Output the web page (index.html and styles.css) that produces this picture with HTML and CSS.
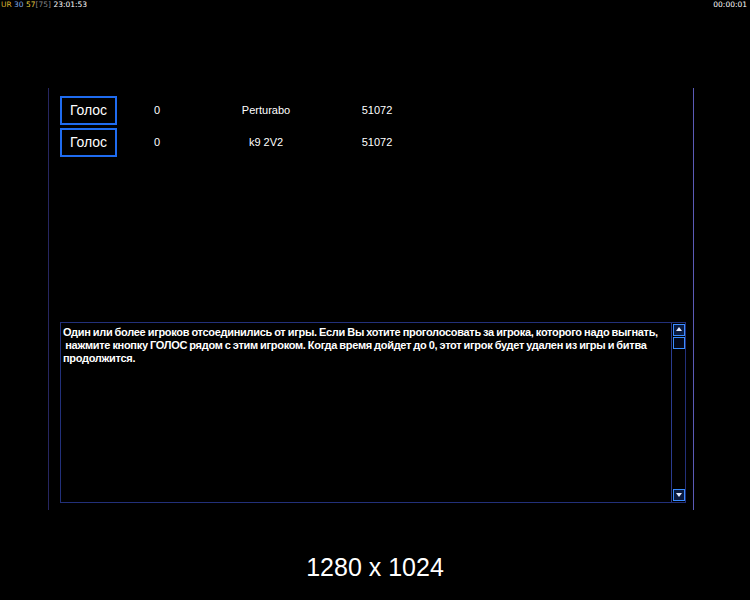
FILE: index.html
```html
<!DOCTYPE html>
<html lang="ru">
<head>
    <meta charset="UTF-8">
    <title>Голосование</title>
    <link rel="stylesheet" href="styles.css">
</head>
<body>
    <div class="topbar">
        <div class="stats">
            <span class="ur">UR</span>
            <span class="fps">30</span>
            <span class="ping">57</span><span class="max">[75]</span>
            <span class="clock">23:01:53</span>
        </div>
        <div class="clock">00:00:01</div>
    </div>

    <div class="panel">
        <div class="row">
            <button class="vote">Голос</button>
            <span class="cell votes">0</span>
            <span class="cell name">Perturabo</span>
            <span class="cell id">51072</span>
        </div>
        <div class="row">
            <button class="vote">Голос</button>
            <span class="cell votes">0</span>
            <span class="cell name">k9 2V2</span>
            <span class="cell id">51072</span>
        </div>

        <div class="message">
            <p class="message-text">Один или более игроков отсоединились от игры. Если Вы хотите проголосовать за игрока, которого надо выгнать,<br>&nbsp;нажмите кнопку ГОЛОС рядом с этим игроком. Когда время дойдет до 0, этот игрок будет удален из игры и битва продолжится.</p>
            <div class="scrollbar">
                <div class="arrow up"></div>
                <div class="thumb"></div>
                <div class="track"></div>
                <div class="arrow down"></div>
            </div>
        </div>
    </div>

    <div class="resolution">1280 x 1024</div>
</body>
</html>
```

FILE: styles.css
```css
body {
    margin: 0;
    width: 750px;
    height: 600px;
    background-color: #000;
    color: #fff;
    font-family: 'Liberation Sans', Arial, sans-serif;
    overflow: hidden;
}
.topbar {
    display: flex;
    justify-content: space-between;
    height: 12px;
    padding: 0 3px 0 1px;
    font-family: 'DejaVu Sans', sans-serif;
    font-size: 7.5px;
    line-height: 10px;
}
.ur { color: #d8b030; }
.fps { color: #7fa8e8; }
.ping { color: #e8d040; }
.max { color: #888; }
.clock { color: #fff; }

.panel {
    position: relative;
    margin: 76px 0 0 48px;
    width: 646px;
    height: 422px;
    border-left: 1px solid #262660;
    border-right: 1px solid #5a5ab8;
    padding: 8px 0 0 11px;
    box-sizing: border-box;
}
.row {
    display: flex;
    align-items: center;
    height: 28px;
    margin-bottom: 4px;
}
.vote {
    width: 57px;
    height: 29px;
    background: #000;
    color: #fff;
    border: 2px solid #1f6cf0;
    font-family: 'Liberation Sans', Arial, sans-serif;
    font-size: 14px;
    padding: 0;
}
.cell {
    font-size: 11px;
    text-align: center;
}
.votes { width: 80px; }
.name { width: 140px; margin-left: -1px; }
.id { width: 82px; }

.message {
    display: flex;
    margin-top: 166px;
    width: 626px;
    height: 181px;
    border: 1px solid #22307a;
    box-sizing: border-box;
}
.message-text {
    flex: 1;
    margin: 0;
    padding: 3px 4px 0 2px;
    font-size: 11px;
    line-height: 13px;
    font-weight: bold;
    letter-spacing: -0.3px;
    word-spacing: -0.5px;
}
.scrollbar {
    display: flex;
    flex-direction: column;
    width: 13px;
    border-left: 1px solid #2a3c90;
    padding: 1px 0;
}
.arrow,
.thumb {
    height: 10px;
    border: 1px solid #3a8cff;
    margin-left: 1px;
    position: relative;
}
.thumb {
    margin-top: 1px;
    background: #04081a;
}
.track {
    flex: 1;
}
.arrow {
    background: #0a1a40;
}
.arrow::after {
    content: "";
    position: absolute;
    left: 2px;
    border-left: 3px solid transparent;
    border-right: 3px solid transparent;
}
.arrow.up::after {
    top: 2px;
    border-bottom: 4px solid #dfe8ff;
}
.arrow.down::after {
    top: 3px;
    border-top: 4px solid #dfe8ff;
}

.resolution {
    margin-top: 42px;
    text-align: center;
    font-size: 25px;
    line-height: 30px;
}
```
